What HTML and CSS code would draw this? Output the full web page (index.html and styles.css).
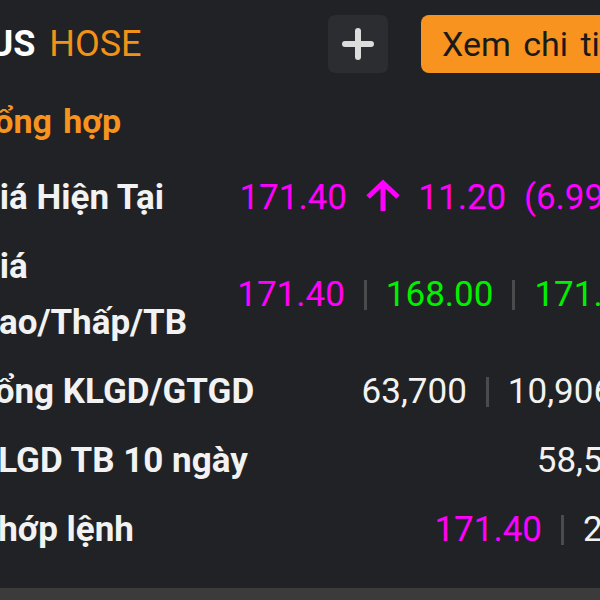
FILE: index.html
```html
<!DOCTYPE html>
<html lang="vi">
<head>
    <meta charset="UTF-8">
    <meta name="viewport" content="width=device-width, initial-scale=1.0">
    <title>Tổng hợp</title>
    <link rel="stylesheet" href="styles.css">
</head>
<body>
    <div class="panel">
        <div class="head">
            <div class="title">
                <span class="ticker">DUS</span>
                <span class="exchange">HOSE</span>
            </div>
            <div class="actions">
                <button class="add-btn" title="Thêm">
                    <svg width="34" height="34" viewBox="0 0 34 34">
                        <path d="M17 4v26M4 17h26" stroke="#dcdcdc" stroke-width="6" stroke-linecap="round" fill="none"/>
                    </svg>
                </button>
                <button class="detail-btn">Xem chi tiết</button>
            </div>
        </div>

        <h3 class="section">Tổng hợp</h3>

        <div class="rows">
            <div class="row">
                <div class="label">Giá Hiện Tại</div>
                <div class="value ceil">171.40 <svg class="arrow" width="36" height="34" viewBox="0 0 36 34"><path d="M18 32V5M3 18L18 4l15 14" stroke="#f0f" stroke-width="5" fill="none"/></svg> 11.20 (6.99%)</div>
            </div>
            <div class="row">
                <div class="label">Giá Cao/Thấp/TB</div>
                <div class="value">
                    <span class="ceil">171.40</span><span class="sep"></span><span class="up">168.00</span><span class="sep"></span><span class="up">171.10</span>
                </div>
            </div>
            <div class="row">
                <div class="label">Tổng KLGD/GTGD</div>
                <div class="value">63,700<span class="sep"></span>10,906.8</div>
            </div>
            <div class="row">
                <div class="label">KLGD TB 10 ngày</div>
                <div class="value">58,530</div>
            </div>
            <div class="row">
                <div class="label">Khớp lệnh</div>
                <div class="value"><span class="ceil">171.40</span><span class="sep"></span>200</div>
            </div>
        </div>
    </div>
    <div class="footer"></div>
</body>
</html>
```

FILE: styles.css
```css
body {
    margin: 0;
    background-color: #202225;
    font-family: Roboto, "Noto Sans", sans-serif;
    color: #f2f2f2;
    overflow: hidden;
}
.panel {
    margin-left: -24px;
    width: 666px;
}
.head {
    display: flex;
    align-items: center;
    height: 58px;
    margin-top: 15px;
}
.title {
    display: flex;
    align-items: baseline;
    gap: 14px;
    margin-left: -10px;
    font-size: 36px;
}
.ticker {
    font-weight: bold;
    color: #ffffff;
}
.exchange {
    color: #f39218;
}
.actions {
    margin-left: auto;
    display: flex;
    gap: 33px;
}
.add-btn {
    width: 60px;
    height: 58px;
    border: none;
    border-radius: 7px;
    background-color: #2c2d30;
    display: flex;
    align-items: center;
    justify-content: center;
    padding: 0;
}
.detail-btn {
    width: 221px;
    height: 58px;
    padding: 0 0 0 21px;
    border: none;
    border-radius: 8px;
    background-color: #f7931e;
    color: #1a1a1a;
    font-family: Roboto, sans-serif;
    font-size: 34px;
    text-align: left;
    white-space: nowrap;
    overflow: hidden;
    word-spacing: 4px;
}
.section {
    margin: 28px 0 0;
    font-size: 34px;
    line-height: 40px;
    word-spacing: 3px;
    color: #f7941d;
}
.rows {
    margin-top: 22px;
}
.row {
    display: flex;
    align-items: center;
    gap: 16px;
    padding: 6.5px 0;
    font-size: 35px;
    line-height: 56px;
}
.label {
    flex: 1;
    min-width: 0;
    font-weight: bold;
}
.value {
    white-space: nowrap;
    word-spacing: 9px;
}
.ceil {
    color: #f0f;
}
.up {
    color: #00f000;
}
.arrow {
    vertical-align: -4px;
}
.sep {
    display: inline-block;
    width: 3px;
    height: 30px;
    margin: 0 19px;
    vertical-align: -4px;
    background-color: #4a4b4d;
}
.footer {
    margin-top: 24px;
    height: 40px;
    background-color: #3b3b3c;
}
```
